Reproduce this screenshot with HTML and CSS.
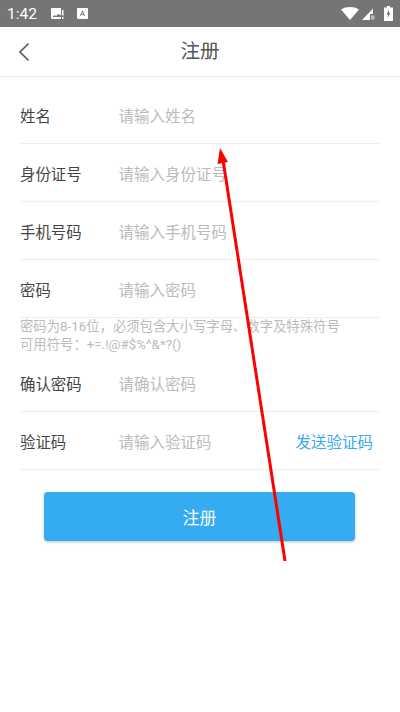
FILE: index.html
```html
<!DOCTYPE html>
<html lang="zh">
<head>
    <meta charset="UTF-8">
    <meta name="viewport" content="width=device-width, initial-scale=1.0">
    <title>注册</title>
    <link rel="stylesheet" href="styles.css">
</head>
<body>
    <div class="status-bar">
        <span class="status-time">1:42</span>
        <svg class="status-icon" width="13" height="13" viewBox="0 0 13 13">
            <path d="M1 1h9v11H1a1 1 0 0 1-1-1V2a1 1 0 0 1 1-1z" fill="#fff"/>
            <path d="M1.500 10l2-2 1.500 1 2.500-2 2.500 1.500V10z" fill="#757575"/>
            <rect x="11" y="3" width="1.500" height="5.500" fill="#fff"/>
            <rect x="11" y="10" width="1.500" height="2" fill="#fff"/>
        </svg>
        <svg class="status-icon" width="11" height="11" viewBox="0 0 11 11">
            <rect width="11" height="11" rx="1" fill="#fff"/>
            <path d="M3 8l2.200-5.500h.6L8 8H6.900l-.4-1.200H4.500L4.100 8zM4.800 6h1.400L5.500 4z" fill="#757575"/>
        </svg>
        <div class="status-right">
            <svg width="18" height="13" viewBox="0 0 18 13">
                <path d="M0 2.500C2.500.8 5.500 0 9 0s6.500.8 9 2.500L9 13z" fill="#fff"/>
            </svg>
            <svg class="status-cell" width="13" height="13" viewBox="0 0 13 13">
                <path d="M0 13L11 1.500V7H8v6z" fill="#fff"/>
                <path d="M9 8.500h3.500v4H9z" fill="#bdbdbd"/>
            </svg>
            <svg width="9" height="15" viewBox="0 0 9 15">
                <path d="M3 0h3v1.500h3V15H0V1.500h3z" fill="#fff"/>
                <path d="M5 3.500L2.500 8.500H4l-.5 3.500L6.500 7H5z" fill="#757575"/>
            </svg>
        </div>
    </div>

    <div class="nav-bar">
        <svg class="back-icon" width="12" height="20" viewBox="0 0 12 20">
            <path d="M10.500 1.500L2 10l8.500 8.500" fill="none" stroke="#555" stroke-width="1.600"/>
        </svg>
        <h1 class="nav-title">注册</h1>
    </div>

    <div class="form">
        <div class="form-row">
            <span class="form-label">姓名</span>
            <span class="form-input">请输入姓名</span>
        </div>
        <div class="form-row">
            <span class="form-label">身份证号</span>
            <span class="form-input">请输入身份证号</span>
        </div>
        <div class="form-row">
            <span class="form-label">手机号码</span>
            <span class="form-input">请输入手机号码</span>
        </div>
        <div class="form-row">
            <span class="form-label">密码</span>
            <span class="form-input">请输入密码</span>
        </div>
        <div class="form-hint">
            <p>密码为8-16位，必须包含大小写字母、数字及特殊符号</p>
            <p>可用符号：+=.!@#$%^&amp;*?()</p>
        </div>
        <div class="form-row">
            <span class="form-label">确认密码</span>
            <span class="form-input">请确认密码</span>
        </div>
        <div class="form-row">
            <span class="form-label">验证码</span>
            <span class="form-input">请输入验证码</span>
            <a class="send-code">发送验证码</a>
        </div>
    </div>

    <button class="submit-btn">注册</button>

    <!-- red arrow drawn over the page -->
    <svg class="arrow-mark" width="400" height="712" viewBox="0 0 400 712">
        <path d="M285 561L223 160" stroke="#f00" stroke-width="3" fill="none"/>
        <path d="M220 148L217.500 164L228 162z" fill="#f00"/>
    </svg>
</body>
</html>
```

FILE: styles.css
```css
body {
    font-family: "Noto Sans CJK SC", "Noto Sans", sans-serif;
    margin: 0;
    padding: 0;
    height: 712px;
    overflow: hidden;
    position: relative;
    background-color: #fff;
}
.status-bar {
    display: flex;
    align-items: center;
    height: 27px;
    padding: 0 7px 0 7px;
    background-color: #757575;
    box-sizing: border-box;
}
.status-time {
    font-family: Roboto, sans-serif;
    font-size: 15.5px;
    color: #fff;
    margin-right: 14px;
}
.status-icon {
    margin-right: 13px;
}
.status-right {
    display: flex;
    align-items: center;
    gap: 3px;
    margin-left: auto;
}
.status-cell {
    margin-right: 6px;
}
.nav-bar {
    display: flex;
    align-items: center;
    justify-content: center;
    position: relative;
    height: 49px;
    border-bottom: 1px solid #e8e8e8;
}
.back-icon {
    position: absolute;
    left: 18px;
    top: 15px;
}
.nav-title {
    margin: -4px 0 0;
    font-size: 19.5px;
    font-weight: normal;
    color: #555;
}
.form {
    padding: 9px 20px 0;
}
.form-row {
    display: flex;
    align-items: center;
    height: 58px;
    box-sizing: border-box;
    border-bottom: 1px solid #eee;
}
.form-label {
    width: 98.5px;
    font-size: 15.4px;
    color: #444;
}
.form-input {
    flex: 1;
    font-size: 15.5px;
    color: #bbb;
}
.send-code {
    font-size: 15.5px;
    color: #3aa9ee;
    margin-right: 7px;
}
.form-hint {
    height: 36px;
    font-family: Roboto, "Noto Sans CJK SC", sans-serif;
    font-size: 13.35px;
    line-height: 18px;
    color: #bbb;
}
.form-hint p {
    margin: 0;
}
.submit-btn {
    display: block;
    width: 311px;
    height: 49px;
    margin: 22px 0 0 44px;
    background-color: #35abf1;
    color: #fff;
    font-family: inherit;
    font-size: 17px;
    border: none;
    border-radius: 4px;
    box-shadow: 0 1px 3px rgba(0, 0, 0, 0.25);
}
.arrow-mark {
    position: absolute;
    left: 0;
    top: 0;
    pointer-events: none;
}
```
